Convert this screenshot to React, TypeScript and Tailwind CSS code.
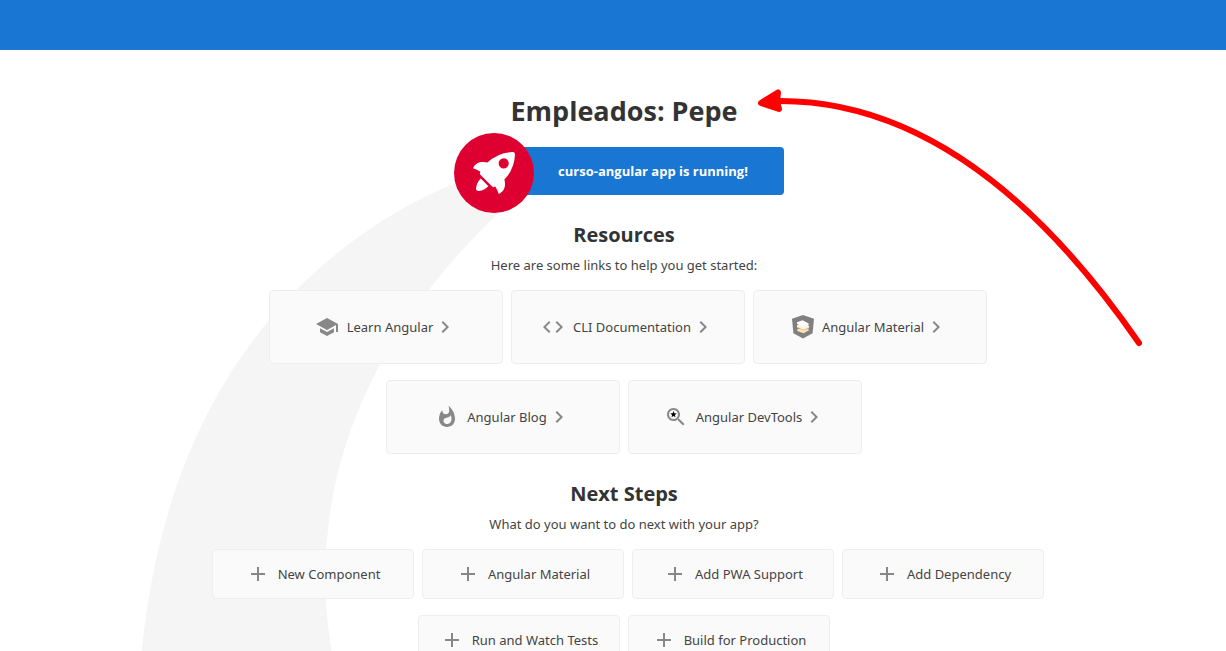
import type { ReactNode } from "react";

function Icon({ children }: { children: ReactNode }) {
  return (
    <svg width="24" height="24" viewBox="0 0 24 24" fill="#888888" aria-hidden="true" className="shrink-0">
      {children}
    </svg>
  );
}

function SchoolIcon() {
  return (
    <Icon>
      <path d="M5 13.18v4L12 21l7-3.82v-4L12 17l-7-3.82zM12 3L1 9l11 6 9-4.91V17h2V9L12 3z" />
    </Icon>
  );
}

function CodeIcon() {
  return (
    <Icon>
      <path d="M9.4 16.6L4.8 12l4.6-4.6L8 6l-6 6 6 6 1.4-1.4zm5.2 0l4.6-4.6-4.6-4.6L16 6l6 6-6 6-1.4-1.4z" />
    </Icon>
  );
}

function MaterialIcon() {
  return (
    <svg width="22" height="24" viewBox="0 0 22 24" aria-hidden="true" className="shrink-0">
      <path fill="#808080" d="M11 0 L22 3.8 L20.6 18.2 L11 23.5 L1.4 18.2 L0 3.8 Z" />
      <path fill="#ffe0b2" d="M5.2 14.6 L11.5 12 L17.4 15 L11.6 18.2 L5.2 16 Z" />
      <path fill="#d9b98a" d="M5 12 L11.4 14.8 L17 12.6 L17 13.4 L11.6 15.6 L5 12.8 Z" />
      <path fill="#fff3e0" d="M5 10.2 L11.5 8 L17.2 11 L17.2 12.4 L11.6 14.6 L5 12 Z" />
      <path fill="#ffffff" d="M5 7.2 L10.6 5.2 L16.6 8.6 L16.6 9.9 L11.2 11.6 L5 9 Z" />
    </svg>
  );
}

function FlameIcon() {
  return (
    <Icon>
      <path d="M13.5.67s.74 2.65.74 4.8c0 2.06-1.35 3.73-3.41 3.73-2.07 0-3.63-1.67-3.63-3.73l.03-.36C5.21 7.51 4 10.62 4 14c0 4.42 3.58 8 8 8s8-3.58 8-8C20 8.61 17.41 3.8 13.5.67zM11.71 19c-1.78 0-3.22-1.4-3.22-3.14 0-1.62 1.05-2.76 2.81-3.12 1.77-.36 3.6-1.21 4.62-2.58.39 1.29.59 2.65.59 4.04 0 2.65-2.15 4.8-4.8 4.8z" />
    </Icon>
  );
}

function DevToolsIcon() {
  return (
    <Icon>
      <path d="M15.5 14h-.79l-.28-.27C15.41 12.59 16 11.11 16 9.5 16 5.91 13.09 3 9.5 3S3 5.91 3 9.5 5.91 16 9.5 16c1.61 0 3.09-.59 4.23-1.57l.27.28v.79l5 4.99L20.49 19l-4.99-5zm-6 0C7.01 14 5 11.99 5 9.5S7.01 5 9.5 5 14 7.01 14 9.5 11.99 14 9.5 14z" />
      <path fill="#000000" d="M9.5 6.1l.85 2.25 2.4.1-1.88 1.5.65 2.32L9.5 10.95l-2.02 1.32.65-2.32-1.88-1.5 2.4-.1z" />
    </Icon>
  );
}

function ChevronIcon() {
  return (
    <Icon>
      <path d="M10 6L8.59 7.41 13.17 12l-4.58 4.59L10 18l6-6z" />
    </Icon>
  );
}

function PlusIcon() {
  return (
    <Icon>
      <path d="M19 13h-6v6h-2v-6H5v-2h6V5h2v6h6v2z" />
    </Icon>
  );
}

function Rocket() {
  return (
    <svg width="80" height="80" viewBox="0 0 101.678 101.678" aria-hidden="true" className="absolute -top-[14px] -left-[10px]">
      <circle cx="50.839" cy="50.839" r="50.839" fill="#dd0031" />
      <g transform="translate(24.185 24.185)" fill="#ffffff">
        <path
          transform="translate(0.371 3.363)"
          d="M3.4,42.615a3.084,3.084,0,0,0,3.553,3.553,21.419,21.419,0,0,0,12.215-6.107L9.511,30.4A21.419,21.419,0,0,0,3.4,42.615Z"
        />
        <path d="M53.3,3.221A3.09,3.09,0,0,0,50.081,0,48.227,48.227,0,0,0,18.322,13.437c-6-1.666-14.991-1.221-18.322,7.218A33.892,33.892,0,0,1,9.439,25.1l-.333.666a3.013,3.013,0,0,0,.555,3.553L23.985,43.641a2.9,2.9,0,0,0,3.553.555l.666-.333A33.892,33.892,0,0,1,32.647,53.3c8.55-3.664,8.884-12.326,7.218-18.322A48.227,48.227,0,0,0,53.3,3.221ZM34.424,9.772a6.439,6.439,0,1,1,9.106,9.106,6.368,6.368,0,0,1-9.106,0A6.467,6.467,0,0,1,34.424,9.772Z" />
      </g>
    </svg>
  );
}

function RocketSmoke() {
  return (
    <svg
      width="516"
      height="874"
      viewBox="0 0 516.119 1083.632"
      aria-hidden="true"
      className="absolute top-[10px] right-[180px] -z-10 max-w-none"
    >
      <path
        fill="#f5f5f5"
        transform="translate(-147.02 -140.939)"
        d="M644.6,141S143.02,215.537,147.049,870.207s342.774,201.755,342.774,201.755S404.659,847.213,388.815,762.2c-27.116-145.51-11.551-384.124,271.9-609.1C671.15,139.365,644.6,141,644.6,141Z"
      />
    </svg>
  );
}

function Arrow() {
  return (
    <svg
      width="390"
      height="262"
      viewBox="755 87 390 262"
      aria-hidden="true"
      className="pointer-events-none absolute top-[87px] left-[755px]"
      fill="none"
      stroke="#ff0000"
      strokeLinecap="round"
      strokeLinejoin="round"
    >
      <path strokeWidth="6" d="M1139 343 C1040 200 920 100 778 101" />
      <path strokeWidth="6" fill="#ff0000" d="M761 103 L778 92.500 L777 101.500 L779 109 Z" />
    </svg>
  );
}

const resources = [
  { label: "Learn Angular", icon: <SchoolIcon /> },
  { label: "CLI Documentation", icon: <CodeIcon /> },
  { label: "Angular Material", icon: <MaterialIcon /> },
  { label: "Angular Blog", icon: <FlameIcon /> },
  { label: "Angular DevTools", icon: <DevToolsIcon /> },
];

const steps = [
  "New Component",
  "Angular Material",
  "Add PWA Support",
  "Add Dependency",
  "Run and Watch Tests",
  "Build for Production",
];

const card =
  "ml-2 mb-4 last:mr-2 flex items-center justify-center rounded-[4px] border border-[#eeeeee] bg-[#fafafa]";

const heading = "font-['Open_Sans',sans-serif] font-bold text-[#333333]";

function ResourceCard({ label, icon }: { label: string; icon: ReactNode }) {
  return (
    <a href="#" className={`${card} h-[74px] w-[234px]`}>
      {icon}
      <span className="ml-2">{label}</span>
      <ChevronIcon />
    </a>
  );
}

export default function App() {
  return (
    <div className="relative isolate min-h-screen overflow-hidden bg-white font-['Noto_Sans','Open_Sans',sans-serif] text-[13px] leading-5 text-[#444444]">
      <header className="h-[50px] bg-[#1976d2]" />
      <main className="ml-[22px] flex flex-col items-center pt-10">
        <h1 className={`${heading} text-[27px] leading-[42px]`}>Empleados: Pepe</h1>
        <div className="relative mt-[15px] w-80">
          <RocketSmoke />
          <div className="flex h-12 items-center justify-center rounded-[4px] bg-[#1976d2] pl-[58px] font-['Open_Sans',sans-serif] font-bold text-white">
            <span>curso-angular app is running!</span>
          </div>
          <Rocket />
        </div>

        <h2 className={`${heading} mt-6 text-xl leading-8`}>Resources</h2>
        <p className="mt-1">Here are some links to help you get started:</p>
        <div className="mt-[15px] flex max-w-[960px] flex-wrap justify-center">
          {resources.map((r) => (
            <ResourceCard key={r.label} {...r} />
          ))}
        </div>

        <h2 className={`${heading} mt-2 text-xl leading-8`}>Next Steps</h2>
        <p className="mt-1">What do you want to do next with your app?</p>
        <div className="mt-[15px] flex max-w-[960px] flex-wrap justify-center">
          {steps.map((s) => (
            <button key={s} type="button" className={`${card} h-[50px] w-[202px] gap-2`}>
              <PlusIcon />
              <span>{s}</span>
            </button>
          ))}
        </div>
      </main>
      <Arrow />
    </div>
  );
}
